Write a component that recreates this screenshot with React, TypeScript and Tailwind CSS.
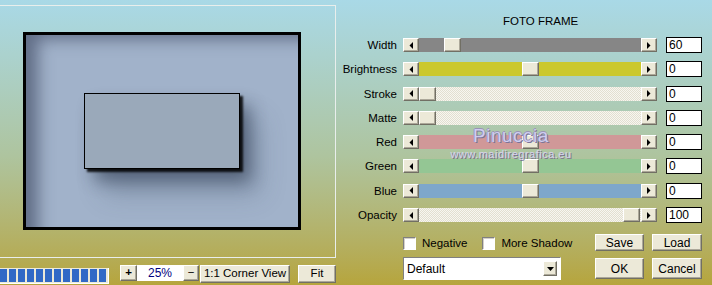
import React from 'react';

const font = "font-['Liberation_Sans',Tahoma,Arial,sans-serif]";

type Row = {
  label: string;
  track: string;
  thumb: string;
  value: string;
};

const hatch =
  'bg-[#efede3] bg-[image:repeating-conic-gradient(#f7f6f0_0_25%,#e2dfd0_0_50%)] bg-[length:2px_2px]';

const rows: Row[] = [
  { label: 'Width', track: 'bg-[#868686]', thumb: 'ml-[25px]', value: '60' },
  { label: 'Brightness', track: 'bg-[#cbc82e]', thumb: 'ml-[103px]', value: '0' },
  { label: 'Stroke', track: hatch, thumb: 'ml-0', value: '0' },
  { label: 'Matte', track: hatch, thumb: 'ml-0', value: '0' },
  { label: 'Red', track: 'bg-[#d09898]', thumb: 'ml-[103px]', value: '0' },
  { label: 'Green', track: 'bg-[#94c694]', thumb: 'ml-[103px]', value: '0' },
  { label: 'Blue', track: 'bg-[#7ea7cb]', thumb: 'ml-[103px]', value: '0' },
  { label: 'Opacity', track: hatch, thumb: 'ml-[204px]', value: '100' },
];

const bevel =
  'bg-[#ece9d8] border border-t-white border-l-white border-r-[#716f64] border-b-[#716f64] shadow-[inset_-1px_-1px_0_#aca899]';

function Arrow({ dir }: { dir: 'left' | 'right' }) {
  return (
    <div className={`w-[16px] h-[14px] flex items-center justify-center ${bevel}`}>
      <svg width="4" height="7" viewBox="0 0 4 7">
        {dir === 'left' ? <polygon points="4,0 4,7 0.5,3.5" fill="#000" /> : <polygon points="0,0 0,7 3.5,3.5" fill="#000" />}
      </svg>
    </div>
  );
}

function Button({ children, className }: { children: React.ReactNode; className: string }) {
  return (
    <div className={`flex items-center justify-center text-black ${bevel} ${className}`}>{children}</div>
  );
}

function Checkbox({ label }: { label: string }) {
  return (
    <div className="flex items-center">
      <div className="w-[13px] h-[13px] bg-white border border-t-[#808080] border-l-[#808080] border-r-white border-b-white shadow-[inset_1px_1px_0_#d4d0c8]" />
      <span className="ml-[6px] text-[11.5px] text-black">{label}</span>
    </div>
  );
}

export default function App() {
  return (
    <div
      className={`relative w-[712px] h-[285px] overflow-hidden flex bg-gradient-to-b from-[#a9d9e7] via-[#aec49e] via-55% to-[#b6a53c] ${font}`}
    >
      {/* preview side */}
      <div className="w-[340px] flex flex-col">
        <div className="-ml-[2px] mt-[5px] w-[338px] h-[253px] border border-[#e9eeec]">
          <div className="ml-[24px] mt-[26px] w-[278px] h-[198px] border-[3px] border-black bg-[#a1b2ca] shadow-[inset_18px_10px_16px_-6px_rgba(45,55,80,0.55)] overflow-hidden">
            <div className="ml-[58px] mt-[58px] w-[156px] h-[76px] border border-black bg-[#9aa9ba] shadow-[3px_3px_2px_rgba(0,0,0,0.85),10px_12px_16px_rgba(20,30,50,0.45),20px_26px_24px_rgba(60,75,100,0.25)]" />
          </div>
        </div>
        <div className="mt-[7px] flex items-start text-[11.5px]">
          <div className="mt-[3px] w-[109px] h-[16px] bg-[#ece9d8] border-r border-b border-white flex gap-[2px] pt-[1px]">
            {Array.from({ length: 12 }).map((_, i) => (
              <div key={i} className="w-[7px] h-[13px] bg-[#3169c6]" />
            ))}
          </div>
          <Button className="ml-[11px] w-[17px] h-[16px] font-bold">+</Button>
          <div className="w-[46px] h-[16px] bg-white text-[#000080] text-[12px] flex items-center justify-center">25%</div>
          <Button className="w-[16px] h-[16px]">−</Button>
          <Button className="ml-[1px] w-[90px] h-[18px]">1:1 Corner View</Button>
          <Button className="ml-[8px] w-[38px] h-[18px]">Fit</Button>
        </div>
      </div>

      {/* controls side */}
      <div className="w-[372px] flex flex-col text-[11.5px] text-black">
        <div className="h-[38px] pt-[14px] pl-[163px] leading-[14px]">FOTO FRAME</div>
        <div className="flex flex-col gap-[10.3px]">
          {rows.map((r) => (
            <div key={r.label} className="flex items-center h-[14px]">
              <div className="w-[57px] text-right leading-[14px]">{r.label}</div>
              <div className="ml-[6px]">
                <Arrow dir="left" />
              </div>
              <div className={`w-[222px] h-[14px] flex ${r.track}`}>
                <div className={`w-[17px] h-[14px] ${bevel} ${r.thumb}`} />
              </div>
              <Arrow dir="right" />
              <div className="ml-[9px] w-[36px] h-[16px] bg-white border border-black pl-[2px] leading-[14px] text-[12px]">
                {r.value}
              </div>
            </div>
          ))}
        </div>
        <div className="mt-[12px] flex">
          <div className="ml-[63px] w-[192px] flex flex-col">
            <div className="mt-[1px] flex items-center gap-[15px]">
              <Checkbox label="Negative" />
              <Checkbox label="More Shadow" />
            </div>
            <div className="mt-[5px] w-[158px] h-[23px] bg-white border border-t-[#808080] border-l-[#808080] border-r-white border-b-white flex items-center justify-between pl-[3px] pr-[3px]">
              <span className="text-[12px]">Default</span>
              <div className={`w-[14px] h-[15px] flex items-center justify-center ${bevel}`}>
                <svg width="7" height="4" viewBox="0 0 7 4">
                  <polygon points="0,0 7,0 3.5,4" fill="#000" />
                </svg>
              </div>
            </div>
          </div>
          <div className="flex flex-col gap-[7px] text-[12px]">
            <div className="flex gap-[8px]">
              <Button className="w-[49px] h-[17px]">Save</Button>
              <Button className="w-[50px] h-[17px]">Load</Button>
            </div>
            <div className="flex gap-[8px]">
              <Button className="w-[49px] h-[21px]">OK</Button>
              <Button className="w-[50px] h-[21px]">Cancel</Button>
            </div>
          </div>
        </div>
      </div>

      {/* watermark */}
      <div className="absolute left-[448px] top-[125px] w-[126px] flex flex-col items-center pointer-events-none">
        <span className="text-[19px] leading-[22px] tracking-[0.5px] text-[#cfcdf0] [text-shadow:1px_1px_0_#7a7498,-1px_0_0_#9a94b6,0_-1px_0_#9a94b6]">
          Pinuccia
        </span>
        <span className="mt-[1px] text-[11px] leading-[12px] tracking-[0.5px] text-[#d6d4ee] [text-shadow:1px_1px_0_#746f8c]">
          www.maidiregrafica.eu
        </span>
      </div>
    </div>
  );
}
